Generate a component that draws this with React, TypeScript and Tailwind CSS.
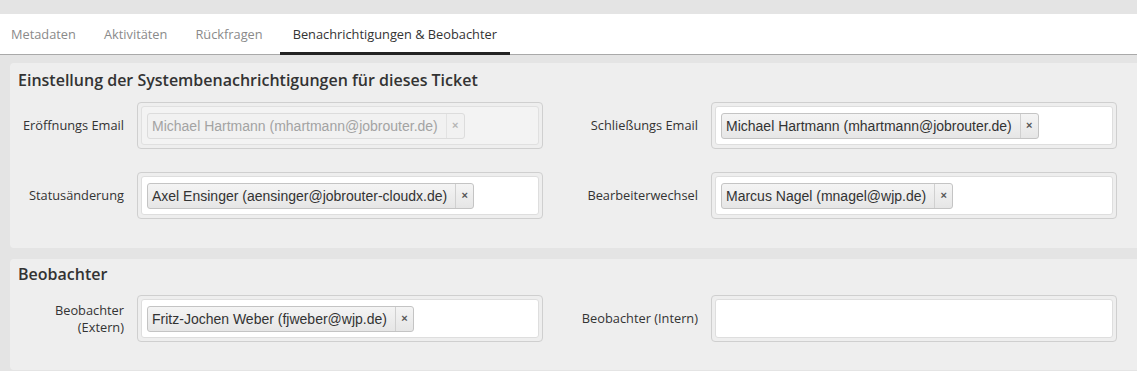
import React from 'react';

interface Recipient {
  label: string;
}

interface FieldProps {
  label: React.ReactNode;
  tags: Recipient[];
  disabled?: boolean;
  labelWidth: string;
}

const tabs = ['Metadaten', 'Aktivitäten', 'Rückfragen', 'Benachrichtigungen & Beobachter'];

const Tag: React.FC<{ text: string; disabled?: boolean }> = ({ text, disabled }) => (
  <div
    className={`flex h-[26px] items-stretch rounded-[3px] border ${
      disabled ? 'border-[#dcdcdc] bg-[#f1f1f1] text-[#a3a3a3]' : 'border-[#c4c4c4] bg-gradient-to-b from-[#f4f4f4] to-[#e6e6e6] text-[#333]'
    }`}
  >
    <span className="flex items-center pl-[4px] pr-[8px] text-[14px] leading-none [font-family:'Liberation_Sans',Arial,sans-serif]">
      {text}
    </span>
    <span
      className={`flex w-[18px] items-center justify-center border-l text-[11px] font-bold leading-none [font-family:'Liberation_Sans',Arial,sans-serif] ${
        disabled ? 'border-[#e2e2e2] text-[#b5b5b5]' : 'border-[#d0d0d0] text-[#555]'
      }`}
    >
      ×
    </span>
  </div>
);

const Field: React.FC<FieldProps> = ({ label, tags, disabled, labelWidth }) => (
  <div className="flex items-center">
    <div className={`${labelWidth} shrink-0 text-right text-[12.8px] leading-[17px] text-[#333]`}>{label}</div>
    <div className="ml-[13px] h-[47px] flex-1 rounded-[4px] border border-[#cfcfcf] p-[3px]">
      <div
        className={`flex h-full items-center gap-1 rounded-[3px] border px-[5px] ${
          disabled ? 'border-[#e0e0e0] bg-[#f3f3f3]' : 'border-[#dedede] bg-white'
        }`}
      >
        {tags.map((t) => (
          <Tag key={t.label} text={t.label} disabled={disabled} />
        ))}
      </div>
    </div>
  </div>
);

export default function App() {
  return (
    <div className="h-[371px] w-[1137px] overflow-hidden bg-[#e4e4e4] pt-[14px] [font-family:'Open_Sans',sans-serif]">
      {/* tab bar */}
      <div className="flex h-[41px] items-stretch gap-[2px] border-b border-[#a9a9a9] bg-white">
        {tabs.map((t, i) => {
          const active = i === tabs.length - 1;
          return (
            <div
              key={t}
              className={`flex items-center text-[12.8px] ${i === 0 ? 'pl-[11px] pr-[13px]' : 'px-[13px]'} ${
                active ? '-mb-px ml-[2px] border-b-[3px] border-[#222] pt-[4px] text-[#333]' : 'pt-[2px] text-[#8a8a8a]'
              }`}
            >
              {t}
            </div>
          );
        })}
      </div>

      <div className="pl-[10px] pt-[8px]">
        {/* system notifications */}
        <div className="rounded-l-[4px] bg-[#eeeeee] pb-[29px] pl-[8px] pt-[6px]">
          <h2 className="text-[16px] font-semibold leading-[22px] text-[#333]">
            Einstellung der Systembenachrichtigungen für dieses Ticket
          </h2>
          <div className="mt-[11px] grid grid-cols-[525px_544px] gap-x-[30px] gap-y-[23px]">
            <Field
              labelWidth="w-[106px]"
              label="Eröffnungs Email"
              disabled
              tags={[{ label: 'Michael Hartmann (mhartmann@jobrouter.de)' }]}
            />
            <Field
              labelWidth="w-[125px]"
              label="Schließungs Email"
              tags={[{ label: 'Michael Hartmann (mhartmann@jobrouter.de)' }]}
            />
            <Field
              labelWidth="w-[106px]"
              label="Statusänderung"
              tags={[{ label: 'Axel Ensinger (aensinger@jobrouter-cloudx.de)' }]}
            />
            <Field
              labelWidth="w-[125px]"
              label="Bearbeiterwechsel"
              tags={[{ label: 'Marcus Nagel (mnagel@wjp.de)' }]}
            />
          </div>
        </div>

        {/* watchers */}
        <div className="mt-[11px] rounded-l-[4px] bg-[#eeeeee] pb-[28px] pl-[8px] pt-[4px]">
          <h2 className="text-[16px] font-semibold leading-[22px] text-[#333]">Beobachter</h2>
          <div className="mt-[10px] grid grid-cols-[525px_544px] gap-x-[30px]">
            <Field
              labelWidth="w-[106px]"
              label={
                <>
                  Beobachter
                  <br />
                  (Extern)
                </>
              }
              tags={[{ label: 'Fritz-Jochen Weber (fjweber@wjp.de)' }]}
            />
            <Field labelWidth="w-[125px]" label="Beobachter (Intern)" tags={[]} />
          </div>
        </div>
      </div>
    </div>
  );
}
